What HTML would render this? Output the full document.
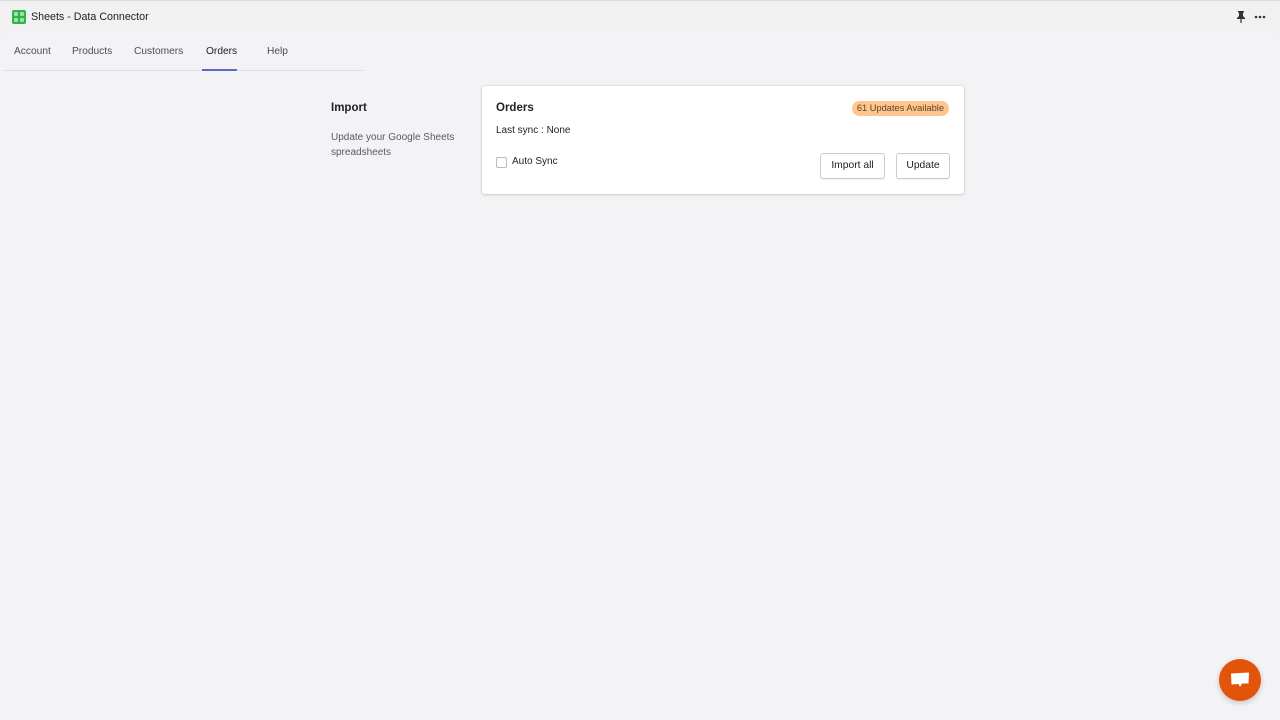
<!DOCTYPE html>
<html><head><meta charset="utf-8"><style>
*{box-sizing:border-box;margin:0;padding:0}
body{width:1280px;height:720px;background:#f1f2f4;font-family:"Liberation Sans",sans-serif;color:#202223;position:relative;overflow:hidden;font-size:11px}
.top{position:absolute;left:0;top:0;width:1280px;height:33px;background:#f1f1f1;border-top:1px solid #ddd}
.logo{position:absolute;left:12px;top:9px;width:14px;height:14px;background:#2fb34a;border-radius:2px}
.logo i{position:absolute;width:4px;height:4px;background:#9fe0a8;border-radius:1px}
.title{position:absolute;left:31px;top:10px;font-size:10.7px;color:#202223}
.main{position:absolute;left:3px;top:33px;width:1274px;height:685px;background:#f3f3f5}
.tabs{position:absolute;left:3px;top:33px;width:360px;height:38px;border-bottom:1px solid #dcdde0}
.tab{position:absolute;top:13px;font-size:10.2px;color:#4a4d52}
.ul{position:absolute;left:202px;top:69px;width:35px;height:2px;background:#5c6ac4}
.card{position:absolute;left:482px;top:86px;width:482px;height:108px;background:#fff;border-radius:3px;box-shadow:0 0 0 1px rgba(63,63,68,.06),0 1px 3px rgba(63,63,68,.18)}
.btn{position:absolute;top:67px;height:26px;border:1px solid #c4cdd5;border-radius:3px;background:#fff;font-size:10.3px;line-height:24px;text-align:center;box-shadow:0 1px 0 rgba(22,29,37,.05)}
</style></head><body>
<div class="top">
<div class="logo"><i style="left:2px;top:2px"></i><i style="left:8px;top:2px"></i><i style="left:2px;top:8px"></i><i style="left:8px;top:8px"></i></div>
<div class="title">Sheets - Data Connector</div>
<svg style="position:absolute;left:1236px;top:10px" width="10" height="12" viewBox="0 0 10 12"><path d="M2 0h6v1.5H7V5l2 2v1H5.6v4h-1.2V8H1V7l2-2V1.5H2z" fill="#333"/></svg>
<svg style="position:absolute;left:1254px;top:14px" width="12" height="4" viewBox="0 0 12 4"><circle cx="2" cy="2" r="1.3" fill="#333"/><circle cx="6" cy="2" r="1.3" fill="#333"/><circle cx="10" cy="2" r="1.3" fill="#333"/></svg>
</div>
<div class="main"></div>
<div class="tabs"></div>
<div class="tab" style="left:14px;top:46px">Account</div>
<div class="tab" style="left:72px;top:46px">Products</div>
<div class="tab" style="left:134px;top:46px">Customers</div>
<div class="tab" style="left:206px;top:46px;color:#202223">Orders</div>
<div class="tab" style="left:267px;top:46px">Help</div>
<div class="ul"></div>
<div style="position:absolute;left:331px;top:102px;font-size:11.5px;font-weight:bold">Import</div>
<div style="position:absolute;left:331px;top:130px;font-size:10px;color:#575b60;line-height:15px;width:130px">Update your Google Sheets spreadsheets</div>
<div class="card">
<div style="position:absolute;left:14px;top:16px;font-size:11.5px;font-weight:bold">Orders</div>
<div style="position:absolute;right:15px;top:15px;height:15px;padding:0 5px;background:#ffc58b;border-radius:8px;font-size:9.3px;line-height:15px;color:#594430">61 Updates Available</div>
<div style="position:absolute;left:14px;top:39px;font-size:10px">Last sync : None</div>
<div style="position:absolute;left:14px;top:71px;width:11px;height:11px;border:1px solid #b4bcc4;border-radius:2px"></div>
<div style="position:absolute;left:30px;top:70px;font-size:10px">Auto Sync</div>
<div class="btn" style="left:338px;width:65px">Import all</div>
<div class="btn" style="left:414px;width:54px">Update</div>
</div>
<div style="position:absolute;left:1219px;top:659px;width:42px;height:42px;border-radius:50%;background:#e2530c;box-shadow:0 2px 6px rgba(0,0,0,.2)">
<svg style="position:absolute;left:11px;top:13px" width="20" height="17" viewBox="0 0 20 17"><path d="M1 1.5L19 0.5 18.5 11.5H12L10 15 8.5 12 1.5 12.5Z" fill="#fff"/></svg>
</div>
</body></html>
